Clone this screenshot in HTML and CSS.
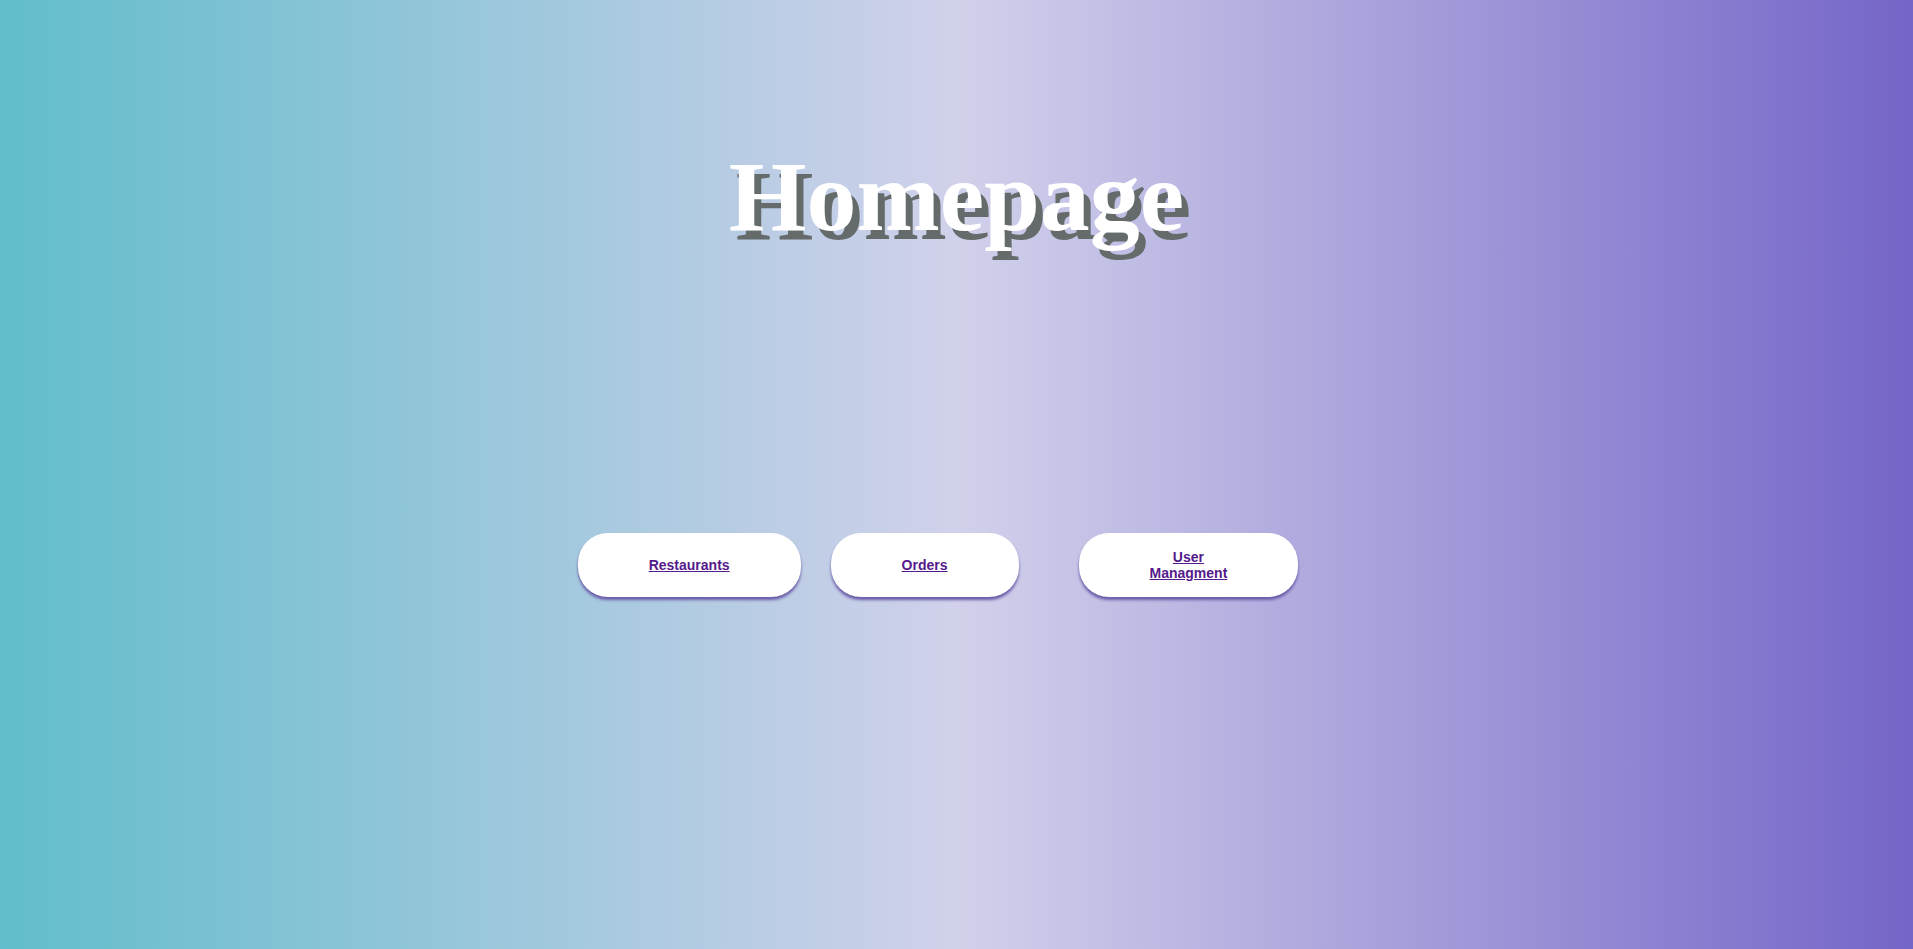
FILE: index.html
```html
<!DOCTYPE html>
<html>
<head>
<meta charset="utf-8">
<title>Homepage</title>
<link rel="stylesheet" href="styles.css">
</head>
<body>
<div class="page">
  <h1 class="title">Homepage</h1>
  <nav class="menu">
    <a class="btn btn-first" href="#"><span class="label">Restaurants</span></a>
    <a class="btn btn-second" href="#"><span class="label">Orders</span></a>
    <a class="btn" href="#"><span class="label">User Managment</span></a>
  </nav>
</div>
</body>
</html>
```
FILE: styles.css
```css
html, body {
  margin: 0;
  padding: 0;
  height: 100%;
}
body {
  background: linear-gradient(to right, #61bdcb 0%, #d1d1eb 50%, #7465c8 100%);
  font-family: "Liberation Serif", "Times New Roman", serif;
}
.page {
  height: 100%;
  padding-top: 139px;
  box-sizing: border-box;
}
.title {
  margin: 0;
  text-align: center;
  font-size: 100px;
  font-weight: bold;
  color: #ffffff;
  text-shadow: 7px 9px 0 #656b6b;
  line-height: normal;
}
.menu {
  display: flex;
  justify-content: center;
  align-items: center;
  margin-top: 279px;
  padding-right: 37px;
}
.btn {
  display: flex;
  align-items: center;
  justify-content: center;
  height: 64px;
  box-sizing: border-box;
  padding: 0 71px;
  background: #ffffff;
  border-radius: 30px;
  box-shadow: 0 3px 3px #6a5ca8;
  color: #551a8b;
  font-family: "Liberation Sans", Arial, sans-serif;
  font-size: 14px;
  font-weight: bold;
  text-align: center;
  text-decoration: underline;
}
.label {
  width: min-content;
}
.btn-first {
  margin-right: 30px;
}
.btn-second {
  margin-right: 60px;
}
```
